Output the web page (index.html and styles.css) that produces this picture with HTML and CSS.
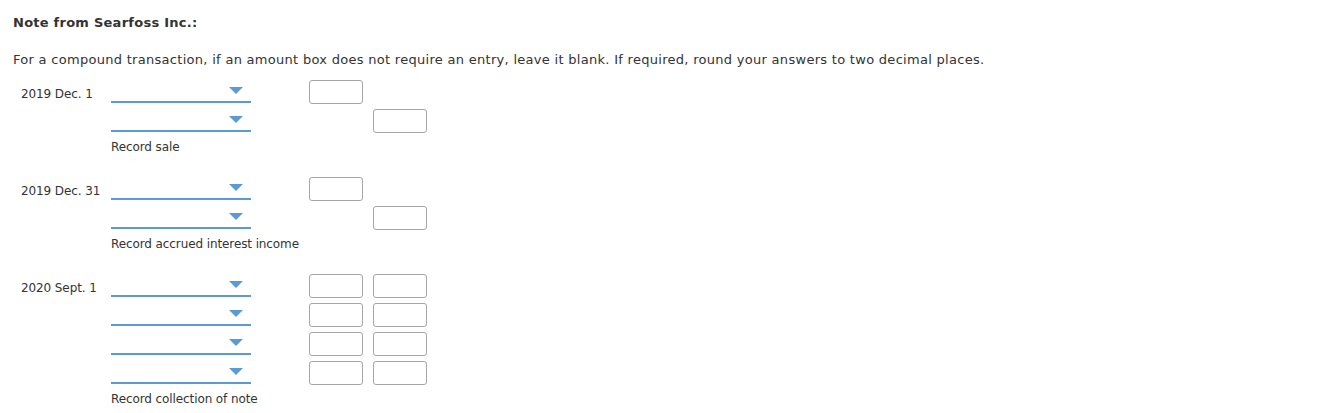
FILE: index.html
```html
<!DOCTYPE html>
<html>
<head>
<meta charset="utf-8">
<link rel="stylesheet" href="styles.css">
</head>
<body>
<div class="page">
  <h1 class="title">Note from Searfoss Inc.:</h1>
  <p class="instr">For a compound transaction, if an amount box does not require an entry, leave it blank. If required, round your answers to two decimal places.</p>
  <div class="journal">
    <div class="entry">
      <div class="row">
        <div class="date">2019 Dec. 1</div>
        <div class="select"><span class="arrow"></span></div>
        <div class="amt"><span class="box"></span></div>
        <div class="amt"></div>
      </div>
      <div class="row">
        <div class="date"></div>
        <div class="select"><span class="arrow"></span></div>
        <div class="amt"></div>
        <div class="amt"><span class="box"></span></div>
      </div>
      <div class="memo">Record sale</div>
    </div>
    <div class="entry">
      <div class="row">
        <div class="date">2019 Dec. 31</div>
        <div class="select"><span class="arrow"></span></div>
        <div class="amt"><span class="box"></span></div>
        <div class="amt"></div>
      </div>
      <div class="row">
        <div class="date"></div>
        <div class="select"><span class="arrow"></span></div>
        <div class="amt"></div>
        <div class="amt"><span class="box"></span></div>
      </div>
      <div class="memo">Record accrued interest income</div>
    </div>
    <div class="entry">
      <div class="row">
        <div class="date">2020 Sept. 1</div>
        <div class="select"><span class="arrow"></span></div>
        <div class="amt"><span class="box"></span></div>
        <div class="amt"><span class="box"></span></div>
      </div>
      <div class="row">
        <div class="date"></div>
        <div class="select"><span class="arrow"></span></div>
        <div class="amt"><span class="box"></span></div>
        <div class="amt"><span class="box"></span></div>
      </div>
      <div class="row">
        <div class="date"></div>
        <div class="select"><span class="arrow"></span></div>
        <div class="amt"><span class="box"></span></div>
        <div class="amt"><span class="box"></span></div>
      </div>
      <div class="row">
        <div class="date"></div>
        <div class="select"><span class="arrow"></span></div>
        <div class="amt"><span class="box"></span></div>
        <div class="amt"><span class="box"></span></div>
      </div>
      <div class="memo">Record collection of note</div>
    </div>
  </div>
</div>
</body>
</html>
```
FILE: styles.css
```css
html, body {
  margin: 0;
  padding: 0;
  background: #fff;
}
.page {
  padding: 14px 0 0 13px;
  color: #333;
}
.title {
  font-family: "DejaVu Sans", Verdana, sans-serif;
  font-size: 13px;
  font-weight: bold;
  letter-spacing: 0.25px;
  line-height: 18px;
  margin: 0;
}
.instr {
  font-family: "DejaVu Sans", Verdana, sans-serif;
  font-size: 13px;
  letter-spacing: 0.29px;
  line-height: 18px;
  margin: 19px 0 0 0;
}
.journal {
  margin-top: 11px;
  padding-left: 8px;
  font-family: "DejaVu Sans", Tahoma, sans-serif;
  font-size: 12px;
  letter-spacing: -0.1px;
}
.entry {
  display: flex;
  flex-direction: column;
  margin-bottom: 22px;
}
.row {
  display: flex;
  height: 24px;
  margin-bottom: 5px;
}
.date {
  width: 90px;
  line-height: 28px;
}
.select {
  width: 140px;
  height: 21px;
  border-bottom: 2px solid #5b9bd5;
  position: relative;
  margin-right: 58px;
}
.arrow {
  position: absolute;
  right: 8px;
  top: 7px;
  width: 0;
  height: 0;
  border-left: 7px solid transparent;
  border-right: 7px solid transparent;
  border-top: 7px solid #5b9bd5;
}
.amt {
  width: 54px;
  height: 24px;
  margin-right: 10px;
}
.box {
  display: block;
  box-sizing: border-box;
  width: 54px;
  height: 24px;
  border: 1px solid #a6a6a6;
  border-radius: 3px;
}
.memo {
  padding-left: 90px;
  line-height: 16px;
  margin-top: 1px;
}
```
